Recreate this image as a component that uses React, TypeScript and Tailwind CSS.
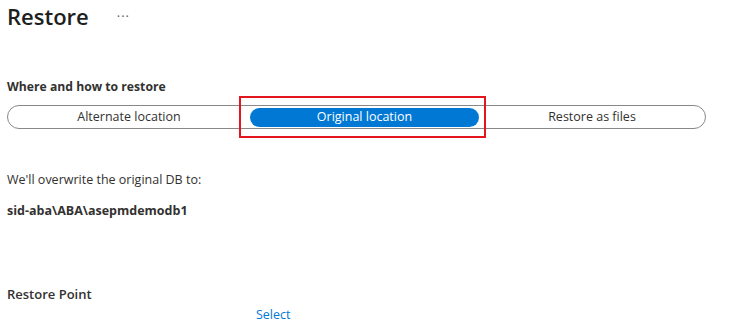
import React from 'react';

const options = [
  { label: 'Alternate location', width: 'w-[242px]' },
  { label: 'Original location', width: 'w-[229px]', active: true },
  { label: 'Restore as files', width: 'flex-1' },
];

const App: React.FC = () => {
  return (
    <div className="w-[729px] h-[335px] bg-white text-[#323130] px-[7px] overflow-hidden" style={{ fontFamily: '"Segoe UI", "Open Sans", sans-serif' }}>
      {/* Header */}
      <div className="flex items-center h-[32px]">
        <h1 className="text-[22px] font-semibold leading-[32px] text-[#201f1e]">Restore</h1>
        <span className="ml-[28px] text-[13px] text-[#605e5c] tracking-[1px] mt-[2px]">···</span>
      </div>

      <h2 className="mt-[46px] text-[12.2px] font-bold leading-[18px]">Where and how to restore</h2>

      {/* Option toggle */}
      <div className="relative mt-[9px] w-[699px] h-[24px] border border-[#8a8886] rounded-full flex items-center">
        {options.map(opt => (
          <div key={opt.label} className={`${opt.width} h-full flex items-center justify-center`}>
            {opt.active ? (
              <div className="w-full h-[19px] bg-[#0078d4] text-white rounded-full flex items-center justify-center text-[12.5px]">
                {opt.label}
              </div>
            ) : (
              <span className="text-[12.5px]">{opt.label}</span>
            )}
          </div>
        ))}
        {/* highlight box */}
        <div className="absolute left-[231px] top-[-10px] w-[247px] h-[42px] border-2 border-[#e3161d]" />
      </div>

      <p className="mt-[42px] text-[12.5px] leading-[18px]">We'll overwrite the original DB to:</p>
      <p className="mt-[13px] text-[12.5px] font-bold leading-[18px]">sid-aba\ABA\asepmdemodb1</p>

      <div className="mt-[64px] text-[13px] font-semibold leading-[20px]">Restore Point</div>
      <div className="mt-[2px] pl-[249px] text-[12.5px] leading-[18px] text-[#0078d4]">Select</div>
    </div>
  );
};

export default App;
